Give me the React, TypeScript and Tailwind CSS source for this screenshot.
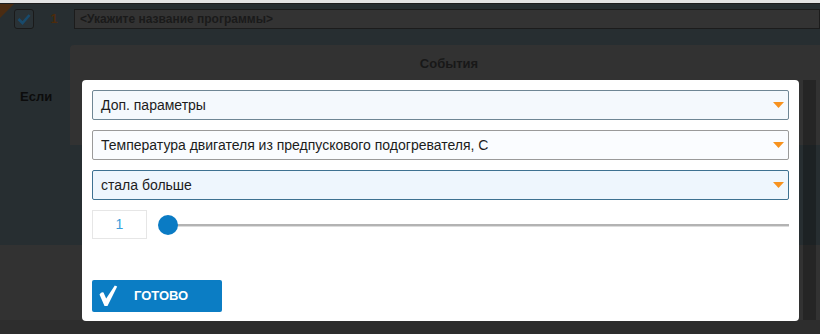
import React from "react";

const FONT = { fontFamily: '"Liberation Sans", Arial, sans-serif' };

function Arrow() {
  return (
    <svg width="11" height="6" viewBox="0 0 11 6" className="shrink-0">
      <polygon points="0,0 11,0 5.5,6" fill="#f7921e" />
    </svg>
  );
}

function Select({ text, border, bg }: { text: string; border: string; bg: string }) {
  return (
    <div
      className={`h-[30px] flex items-center justify-between pl-[8px] pr-[4px] rounded-[2px] border ${border} ${bg} text-[14px] text-[#1c1c1c]`}
    >
      <span className="leading-[16px]">{text}</span>
      <Arrow />
    </div>
  );
}

export default function App() {
  return (
    <div className="relative w-[820px] h-[334px] overflow-hidden bg-[#323232] flex flex-col" style={FONT}>
      <div className="h-[3px] bg-[#e4e4e4] shrink-0" />
      <div className="h-[242px] shrink-0 bg-[#272e31] border-t border-[#1e1e1e] flex flex-col relative">
        <svg width="14" height="14" viewBox="0 0 14 14" className="absolute left-0 top-0">
          <polygon points="0,0 14,0 0,14" fill="#4b2c12" />
        </svg>
        <div className="flex items-start pt-[5px]">
          <div className="ml-[14px] w-[20px] h-[20px] rounded-[3px] border border-[#1a1a1a] bg-[#2a3236] flex items-center justify-center shrink-0">
            <svg width="14" height="12" viewBox="0 0 14 12">
              <path d="M1.5 6 L5.5 10 L12.5 2" stroke="#184a6c" strokeWidth="2.6" fill="none" />
            </svg>
          </div>
          <div className="w-[40px] h-[20px] flex items-center justify-center text-[13px] font-bold text-[#4d2b0c]">1</div>
          <div className="flex-1 h-[20px] border border-[#1c1c1c] bg-[#333333] flex items-center pl-[5px] text-[12px] font-bold text-[#1a1a1a]">
            &lt;Укажите название программы&gt;
          </div>
        </div>
        <div className="flex items-start mt-[16px]">
          <div className="w-[70px] shrink-0 pl-[20px] pt-[44px] text-[13px] font-bold text-[#0c0c0c] leading-[16px]">Если</div>
          <div className="flex-1 h-[100px] bg-[#323232] rounded-tl-[4px] flex justify-center pl-[8px] pt-[11px]">
            <span className="text-[13px] font-bold text-[#181818] leading-[16px]">События</span>
          </div>
        </div>
      </div>
      <div className="flex-1" />
      <div className="h-[14px] bg-[#2d2d2d] shrink-0" />

      <div className="absolute left-[803px] top-[80px] w-[13px] h-[240px] bg-black/25" />

      <div className="absolute left-[82px] top-[80px] w-[717px] h-[241px] bg-white rounded-[4px] px-[10px] pt-[10px] flex flex-col">
        <div className="flex flex-col gap-[10px]">
          <Select text="Доп. параметры" border="border-[#6e8694]" bg="bg-[#f4f9fd]" />
          <Select
            text="Температура двигателя из предпускового подогревателя, С"
            border="border-[#9a9a9a]"
            bg="bg-[#fafcff]"
          />
          <Select text="стала больше" border="border-[#3d7191]" bg="bg-[#eef6fd]" />
        </div>
        <div className="flex items-center mt-[10px]">
          <div className="w-[55px] h-[29px] border border-[#e6e6e6] flex items-center justify-center text-[14px] text-[#3a9edb] shrink-0">
            1
          </div>
          <div className="relative flex-1 h-[20px] ml-[11px]">
            <div className="absolute left-[10px] right-0 top-[9px] h-[2px] bg-[#b3b3b3] shadow-[0_1px_0_#dcdcdc]" />
            <div className="absolute left-0 top-0 w-[20px] h-[20px] rounded-full bg-[#0a7bc4]" />
          </div>
        </div>
        <div className="mt-[41px] w-[130px] h-[32px] rounded-[2px] bg-[#0b7dc4] flex items-center">
          <svg width="19" height="22" viewBox="0 0 19 22" className="ml-[7px] shrink-0">
            <path d="M0.5 9.5 Q2.5 6.5 4.5 7.5 L7.2 13.5 L15.8 0.5 L18.2 1.5 L8.5 21 L5.5 21 Z" fill="#ffffff" />
          </svg>
          <span className="ml-[16px] text-[13px] font-bold text-white leading-[16px]">ГОТОВО</span>
        </div>
      </div>
    </div>
  );
}
